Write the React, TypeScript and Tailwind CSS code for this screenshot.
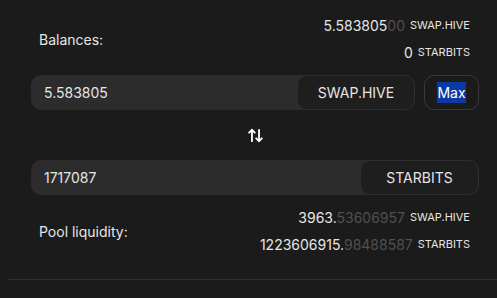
import { ArrowUpDown } from 'lucide-react';

type Amount = {
  whole: string;
  faded?: string;
  symbol: string;
};

function AmountLine({ whole, faded, symbol }: Amount) {
  return (
    <div className="flex h-[27px] items-center justify-end">
      <span className="text-[14px] text-[#e6e6e6]">
        {whole}
        {faded && <span className="text-[#505050]">{faded}</span>}
      </span>
      <span className="ml-[5px] text-[11px] text-[#e6e6e6]">{symbol}</span>
    </div>
  );
}

function InfoBlock({ label, lines }: { label: string; lines: Amount[] }) {
  return (
    <div className="flex items-center justify-between pl-2 pr-[9px]">
      <span className="text-[14px] text-[#e6e6e6]">{label}</span>
      <div className="flex flex-col">
        {lines.map((line) => (
          <AmountLine key={line.symbol} {...line} />
        ))}
      </div>
    </div>
  );
}

export default function App() {
  return (
    <div
      className="h-[298px] w-full overflow-hidden bg-[#1b1b1b]"
      style={{ fontFamily: 'Inter, "Noto Sans", sans-serif' }}
    >
      <div className="pl-[31px] pr-[18px] pt-[12px]">
        <InfoBlock
          label="Balances:"
          lines={[
            { whole: '5.583805', faded: '00', symbol: 'SWAP.HIVE' },
            { whole: '0', symbol: 'STARBITS' },
          ]}
        />

        <div className="mt-[9px] flex gap-[9px]">
          <div className="flex h-[35px] flex-1 items-center rounded-[10px] bg-[#2c2c2c]">
            <span className="flex-1 pl-[13px] text-[14px] text-[#e6e6e6]">5.583805</span>
            <button className="h-full w-[118px] rounded-[10px] border border-[#2e2e2e] bg-[#1e1e1e] text-[14px] text-[#e6e6e6]">
              SWAP.HIVE
            </button>
          </div>
          <button className="flex h-[35px] w-[55px] items-center justify-center rounded-[10px] border border-[#3a3a3a] text-[14px] text-white">
            <span className="bg-[#0b3aa6] leading-[21px]">Max</span>
          </button>
        </div>

        <div className="flex h-[50px] items-center justify-center">
          <ArrowUpDown className="h-[17px] w-[17px] text-white" strokeWidth={2.6} />
        </div>

        <div className="flex h-[35px] items-center rounded-[10px] bg-[#2c2c2c]">
          <span className="flex-1 pl-[13px] text-[14px] text-[#e6e6e6]">1717087</span>
          <button className="h-full w-[119px] rounded-[10px] border border-[#2e2e2e] bg-[#1e1e1e] text-[14px] text-[#e6e6e6]">
            STARBITS
          </button>
        </div>

        <div className="mt-[9px]">
          <InfoBlock
            label="Pool liquidity:"
            lines={[
              { whole: '3963.', faded: '53606957', symbol: 'SWAP.HIVE' },
              { whole: '1223606915.', faded: '98488587', symbol: 'STARBITS' },
            ]}
          />
        </div>
      </div>

      <div className="ml-[7px] mt-[21px] h-px bg-[#2f2f2f]" />
    </div>
  );
}
